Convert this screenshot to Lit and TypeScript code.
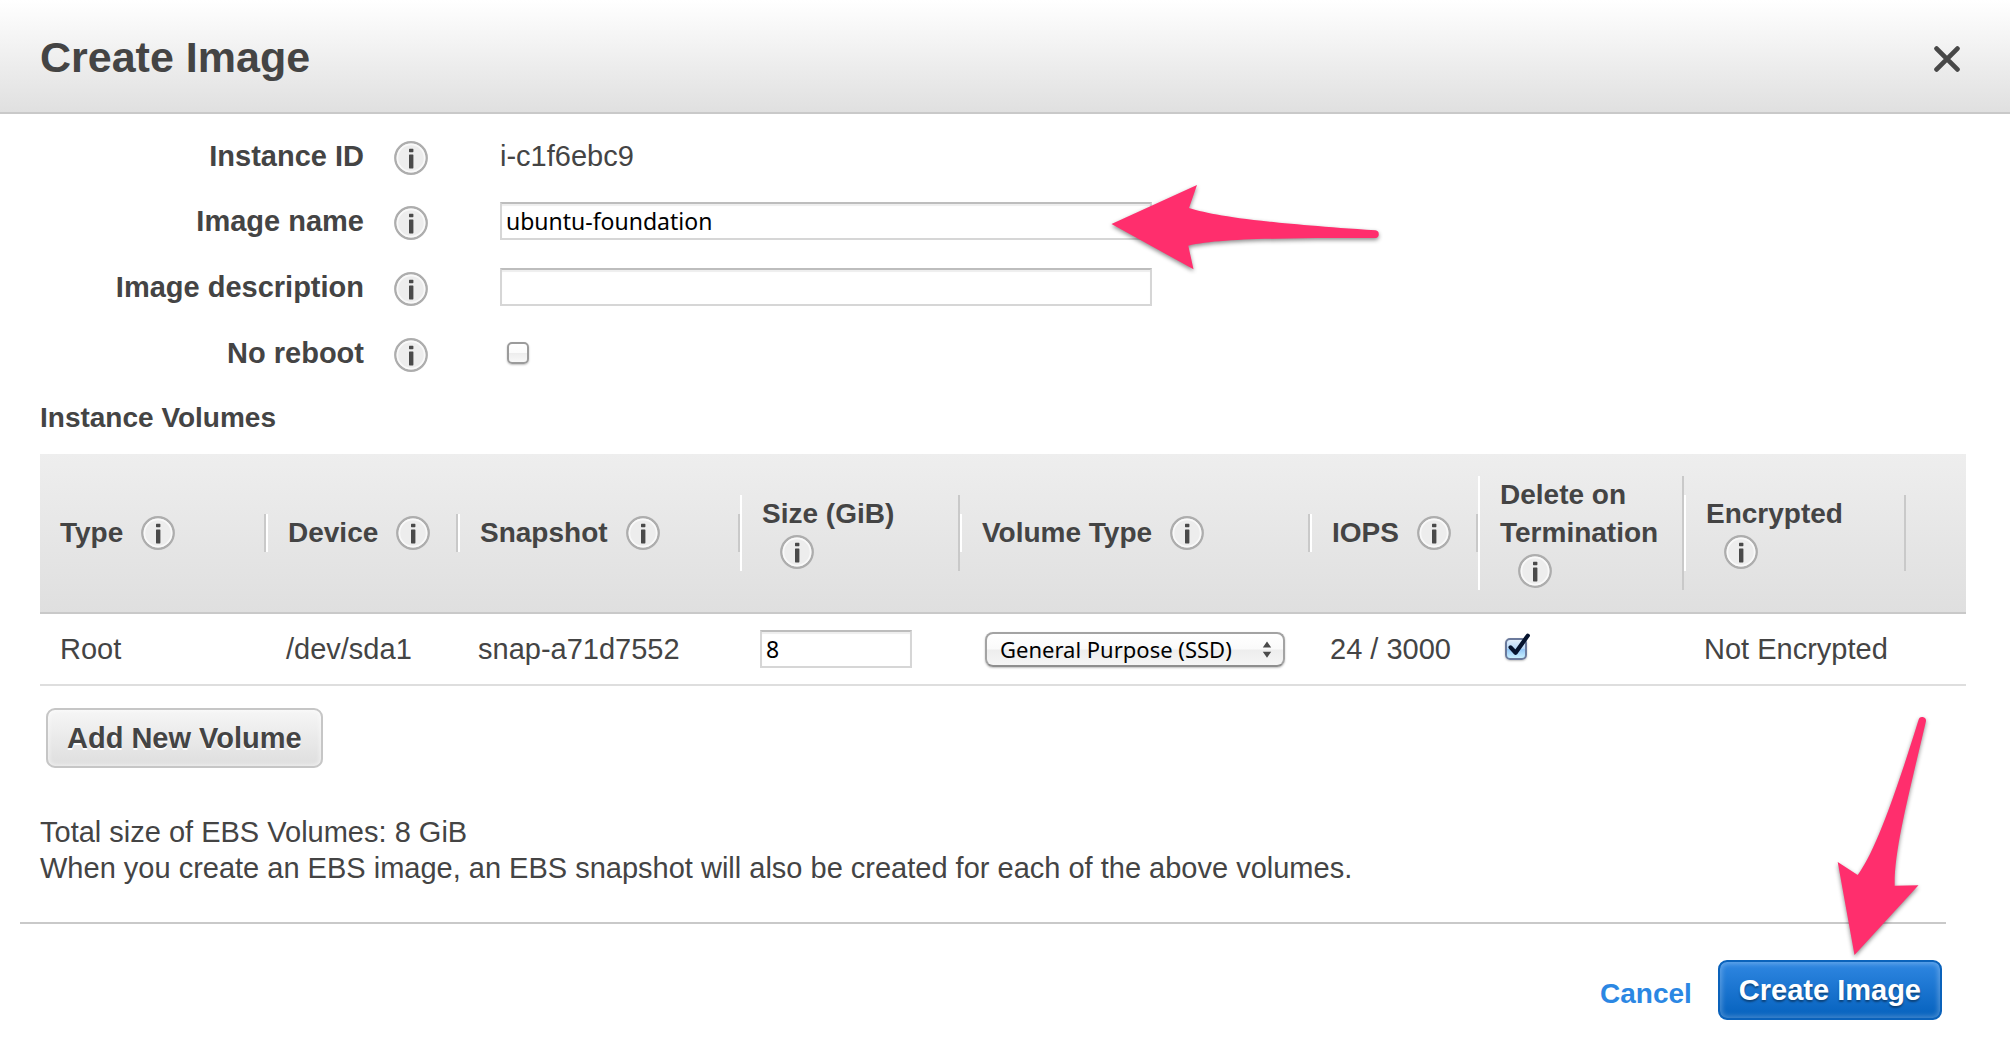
import { LitElement, html, css, svg, nothing } from "lit";
import { customElement, property, state } from "lit/decorators.js";

interface Column {
  label: string;
  width: number;
}

const COLUMNS: Column[] = [
  { label: "Type", width: 226 },
  { label: "Device", width: 192 },
  { label: "Snapshot", width: 282 },
  { label: "Size (GiB)", width: 220 },
  { label: "Volume Type", width: 350 },
  { label: "IOPS", width: 168 },
  { label: "Delete on Termination", width: 206 },
  { label: "Encrypted", width: 222 },
  { label: "", width: 60 },
];

@customElement("info-icon")
class InfoIcon extends LitElement {
  @property() topic = "";

  static styles = css`
    :host {
      display: block;
      flex: none;
      width: 34px;
      height: 34px;
    }
    .info {
      display: block;
      width: 34px;
      height: 34px;
      margin: 0;
      padding: 0;
      border: 0;
      background: none;
      cursor: pointer;
    }
    .glyph {
      display: block;
    }
  `;

  render() {
    return html`<button class="info" type="button" aria-label="About ${this.topic}">
      <svg class="glyph" width="34" height="34" viewBox="0 0 34 34" aria-hidden="true">
        <circle cx="17" cy="17" r="15.7" fill="#ededed" stroke="#adadad" stroke-width="2.4" />
        <circle cx="17" cy="17" r="13.6" fill="none" stroke="#f9f9f9" stroke-width="1.6" />
        <rect x="15" y="7.8" width="4.4" height="3.4" rx="0.6" fill="#4a4a4a" />
        <rect x="15" y="13.4" width="4.4" height="14" rx="0.6" fill="#4a4a4a" />
      </svg>
    </button>`;
  }
}

@customElement("tick-box")
class TickBox extends LitElement {
  @property({ type: Boolean }) checked = false;
  @property() label = "";

  static styles = css`
    :host {
      display: block;
      width: 22px;
      height: 22px;
    }
    .wrap {
      position: relative;
      display: block;
      width: 22px;
      height: 22px;
    }
    .box {
      appearance: none;
      display: block;
      box-sizing: border-box;
      width: 22px;
      height: 22px;
      margin: 0;
      border: 2px solid #9b9b9b;
      border-radius: 5px;
      background: linear-gradient(#ffffff 0%, #fbfbfb 48%, #ededed 52%, #f8f8f8 100%);
      box-shadow: 0 1px 2px rgba(0, 0, 0, 0.25);
    }
    .box:checked {
      border-color: #6b7a9c;
      background: linear-gradient(#e2f0fd 0%, #b5d7f8 48%, #93c6f6 52%, #c8f0ff 100%);
    }
    .mark {
      position: absolute;
      left: 2px;
      top: -6px;
      pointer-events: none;
    }
  `;

  private toggle(e: Event) {
    this.checked = (e.target as HTMLInputElement).checked;
  }

  render() {
    return html`<span class="wrap">
      <input class="box" type="checkbox" aria-label=${this.label} .checked=${this.checked} @change=${this.toggle} />
      ${this.checked
        ? html`<svg class="mark" width="26" height="26" viewBox="0 0 26 26" aria-hidden="true">
            <path d="M3.6 15.4 L8.6 20.8 L20.8 3.6" fill="none" stroke="#06142f" stroke-width="4.2" stroke-linecap="round" stroke-linejoin="round" />
          </svg>`
        : nothing}
    </span>`;
  }
}

@customElement("app-root")
class AppRoot extends LitElement {
  @state() private imageName = "ubuntu-foundation";
  @state() private size = "8";

  static styles = css`
    :host {
      display: block;
      background: #fff;
      color: #444;
      font: 29px/36px "Liberation Sans", Arial, sans-serif;
    }
    .header {
      display: flex;
      align-items: center;
      justify-content: space-between;
      height: 110px;
      padding: 2px 50px 0 40px;
      border-bottom: 2px solid #c9c9c9;
      background: linear-gradient(#fff, #e0e0e0);
    }
    .title {
      margin: 0;
      font-size: 43px;
      line-height: 52px;
    }
    .close {
      margin: 4px 0 0;
      padding: 0;
      border: 0;
      background: none;
      cursor: pointer;
    }
    .close-glyph {
      display: block;
    }
    .body {
      padding: 24px 44px 36px 40px;
    }
    .form {
      display: grid;
      grid-template-columns: 324px 76px minmax(0, 652px);
      grid-template-rows: 36px;
      grid-auto-rows: 38px;
      gap: 28px 30px;
      align-items: center;
    }
    .label {
      justify-self: end;
      font-weight: bold;
    }
    .help {
      padding-top: 4px;
    }
    .field {
      position: relative;
    }
    .text {
      display: block;
      box-sizing: border-box;
      width: 100%;
      height: 38px;
      margin: 0;
      padding: 0 4px;
      border: 2px solid #d6d6d6;
      border-top-color: #bdbdbd;
      border-radius: 0;
      outline: 0;
      background: #fff;
      box-shadow: inset 0 2px 1px #eee;
      color: #000;
      font: 23px/34px "Noto Sans", "Open Sans", sans-serif;
    }
    .text.size {
      width: 152px;
    }
    .tick {
      margin-left: 7px;
    }
    .arrow {
      position: absolute;
      overflow: visible;
      pointer-events: none;
      filter: drop-shadow(0 2px 2px rgba(0, 0, 0, 0.45));
    }
    .arrow.to-name {
      right: -233px;
      top: -22px;
    }
    .arrow.to-submit {
      right: 2px;
      bottom: 60px;
    }
    .section {
      margin: 28px 0 18px;
      font-size: 28px;
      line-height: 36px;
    }
    .scroller {
      overflow-x: auto;
    }
    .volumes {
      width: 100%;
      table-layout: fixed;
      border-spacing: 0;
    }
    .head-row {
      background: linear-gradient(#eee, #dfdfdf);
    }
    .th {
      padding: 22px 0;
      border-bottom: 2px solid #c9c9c9;
      text-align: left;
      vertical-align: middle;
      font-size: 28px;
    }
    .col {
      display: flex;
      flex-wrap: wrap;
      align-items: center;
      padding: 0 18px 0 20px;
      border-left: 2px solid #fff;
      border-right: 2px solid #c9c9c9;
      line-height: 38px;
    }
    .th:first-child .col {
      border-left: 0;
    }
    .col-help {
      display: flex;
      align-items: center;
      height: 38px;
      margin-left: 18px;
    }
    .td {
      height: 70px;
      padding: 0 0 0 20px;
      border-bottom: 2px solid #dedede;
      white-space: nowrap;
    }
    .picker {
      position: relative;
      display: block;
      width: 300px;
      margin-left: 5px;
    }
    .select {
      appearance: none;
      display: block;
      box-sizing: border-box;
      width: 100%;
      height: 35px;
      margin: 0;
      padding: 0 40px 0 13px;
      border: 2px solid #a3a3a3;
      border-bottom-color: #8e8e8e;
      border-radius: 8px;
      background: linear-gradient(#fff 0%, #fafafa 48%, #ededed 52%, #f5f5f5 100%);
      box-shadow: 0 1px 2px rgba(0, 0, 0, 0.25);
      color: #000;
      font: 22px/30px "Noto Sans", "Open Sans", sans-serif;
    }
    .chevrons {
      position: absolute;
      right: 13px;
      top: 9px;
      pointer-events: none;
    }
    .button {
      height: 60px;
      margin: 0;
      padding: 0 19px;
      border: 2px solid #c6c6c6;
      border-radius: 9px;
      background: linear-gradient(#f6f6f6, #dedede);
      box-shadow: inset 0 0 4px 1px rgba(255, 255, 255, 0.6);
      color: #444;
      font: bold 29px/36px "Liberation Sans", Arial, sans-serif;
      text-shadow: 0 2px 0 #fff;
      cursor: pointer;
    }
    .button.add {
      display: block;
      margin: 22px 0 46px 6px;
    }
    .button.primary {
      border-color: #0a62bb;
      background: linear-gradient(#2f87e2, #0561bd);
      box-shadow: inset 0 0 5px 2px rgba(255, 255, 255, 0.25);
      color: #fff;
      text-shadow: 0 2px 2px rgba(0, 0, 0, 0.4);
    }
    .note {
      margin: 0;
    }
    .footer {
      display: flex;
      align-items: center;
      justify-content: flex-end;
      gap: 26px;
      margin: 0 64px 0 20px;
      padding: 36px 4px 22px 0;
      border-top: 2px solid #c9c9c9;
    }
    .cancel {
      padding-top: 8px;
      color: #2b87e3;
      font-size: 28px;
      font-weight: bold;
      text-decoration: none;
    }
    .submit {
      position: relative;
    }
  `;

  private heading(column: Column) {
    return html`<th class="th" scope="col">
      ${column.label
        ? html`<div class="col">
            <span>${column.label}</span>
            <span class="col-help"><info-icon topic=${column.label}></info-icon></span>
          </div>`
        : nothing}
    </th>`;
  }

  private arrow(name: string, width: number, height: number, path: string) {
    return html`<svg class="arrow ${name}" width=${width} height=${height} viewBox="0 0 ${width} ${height}" aria-hidden="true">
      ${svg`<path d=${path} fill="#ff2e6d" />`}
    </svg>`;
  }

  render() {
    return html`
      <header class="header">
        <h1 class="title">Create Image</h1>
        <button class="close" type="button" aria-label="Close">
          <svg class="close-glyph" width="26" height="26" viewBox="0 0 26 26" aria-hidden="true">
            <path d="M2.6 2.6 L23.4 23.4 M23.4 2.6 L2.6 23.4" fill="none" stroke="#484848" stroke-width="4.8" stroke-linecap="round" />
          </svg>
        </button>
      </header>

      <main class="body">
        <div class="form">
          <span class="label">Instance ID</span>
          <div class="help"><info-icon topic="Instance ID"></info-icon></div>
          <div class="field">i-c1f6ebc9</div>

          <label class="label" for="image-name">Image name</label>
          <div class="help"><info-icon topic="Image name"></info-icon></div>
          <div class="field">
            <input
              id="image-name"
              class="text"
              type="text"
              .value=${this.imageName}
              @input=${(e: Event) => (this.imageName = (e.target as HTMLInputElement).value)}
            />
            ${this.arrow(
              "to-name",
              280,
              100,
              "M6.5 44 L92 5 L84 28 C110 36 150 42 270.5 50.3 A3.9 3.9 0 0 1 270.5 58 C190 58 115 58 83.3 65.7 L88.5 89.3 Z"
            )}
          </div>

          <label class="label" for="image-description">Image description</label>
          <div class="help"><info-icon topic="Image description"></info-icon></div>
          <div class="field"><input id="image-description" class="text" type="text" /></div>

          <span class="label">No reboot</span>
          <div class="help"><info-icon topic="No reboot"></info-icon></div>
          <div class="field"><tick-box class="tick" label="No reboot"></tick-box></div>
        </div>

        <h2 class="section">Instance Volumes</h2>
        <div class="scroller">
          <table class="volumes">
            <colgroup>
              ${COLUMNS.map((c) => html`<col style="width:${c.width}px" />`)}
            </colgroup>
            <thead>
              <tr class="head-row">
                ${COLUMNS.map((c) => this.heading(c))}
              </tr>
            </thead>
            <tbody>
              <tr>
                <td class="td">Root</td>
                <td class="td">/dev/sda1</td>
                <td class="td">snap-a71d7552</td>
                <td class="td">
                  <input
                    class="text size"
                    type="text"
                    aria-label="Size (GiB)"
                    .value=${this.size}
                    @input=${(e: Event) => (this.size = (e.target as HTMLInputElement).value)}
                  />
                </td>
                <td class="td">
                  <span class="picker">
                    <select class="select" aria-label="Volume Type">
                      <option>General Purpose (SSD)</option>
                    </select>
                    <svg class="chevrons" width="10" height="18" viewBox="0 0 10 18" aria-hidden="true">
                      <path d="M5 0.5 L9.2 6.6 H0.8 Z M5 16.8 L0.8 10.7 H9.2 Z" fill="#4a4a4a" />
                    </svg>
                  </span>
                </td>
                <td class="td">24 / 3000</td>
                <td class="td"><tick-box class="tick" label="Delete on Termination" checked></tick-box></td>
                <td class="td">Not Encrypted</td>
                <td class="td"></td>
              </tr>
            </tbody>
          </table>
        </div>

        <button class="button add" type="button">Add New Volume</button>
        <p class="note">Total size of EBS Volumes: ${this.size} GiB</p>
        <p class="note">When you create an EBS image, an EBS snapshot will also be created for each of the above volumes.</p>
      </main>

      <footer class="footer">
        <a class="cancel" href="#">Cancel</a>
        <div class="submit">
          <button class="button primary" type="submit">Create Image</button>
          ${this.arrow(
            "to-submit",
            110,
            250,
            "M24.5 245 L7.7 152 L27.7 165 C42 146 60 102 88.5 10 A3.8 3.8 0 0 1 96 11 C79 84 64 140 64.7 175.7 L88.5 175.3 Z"
          )}
        </div>
      </footer>
    `;
  }
}
